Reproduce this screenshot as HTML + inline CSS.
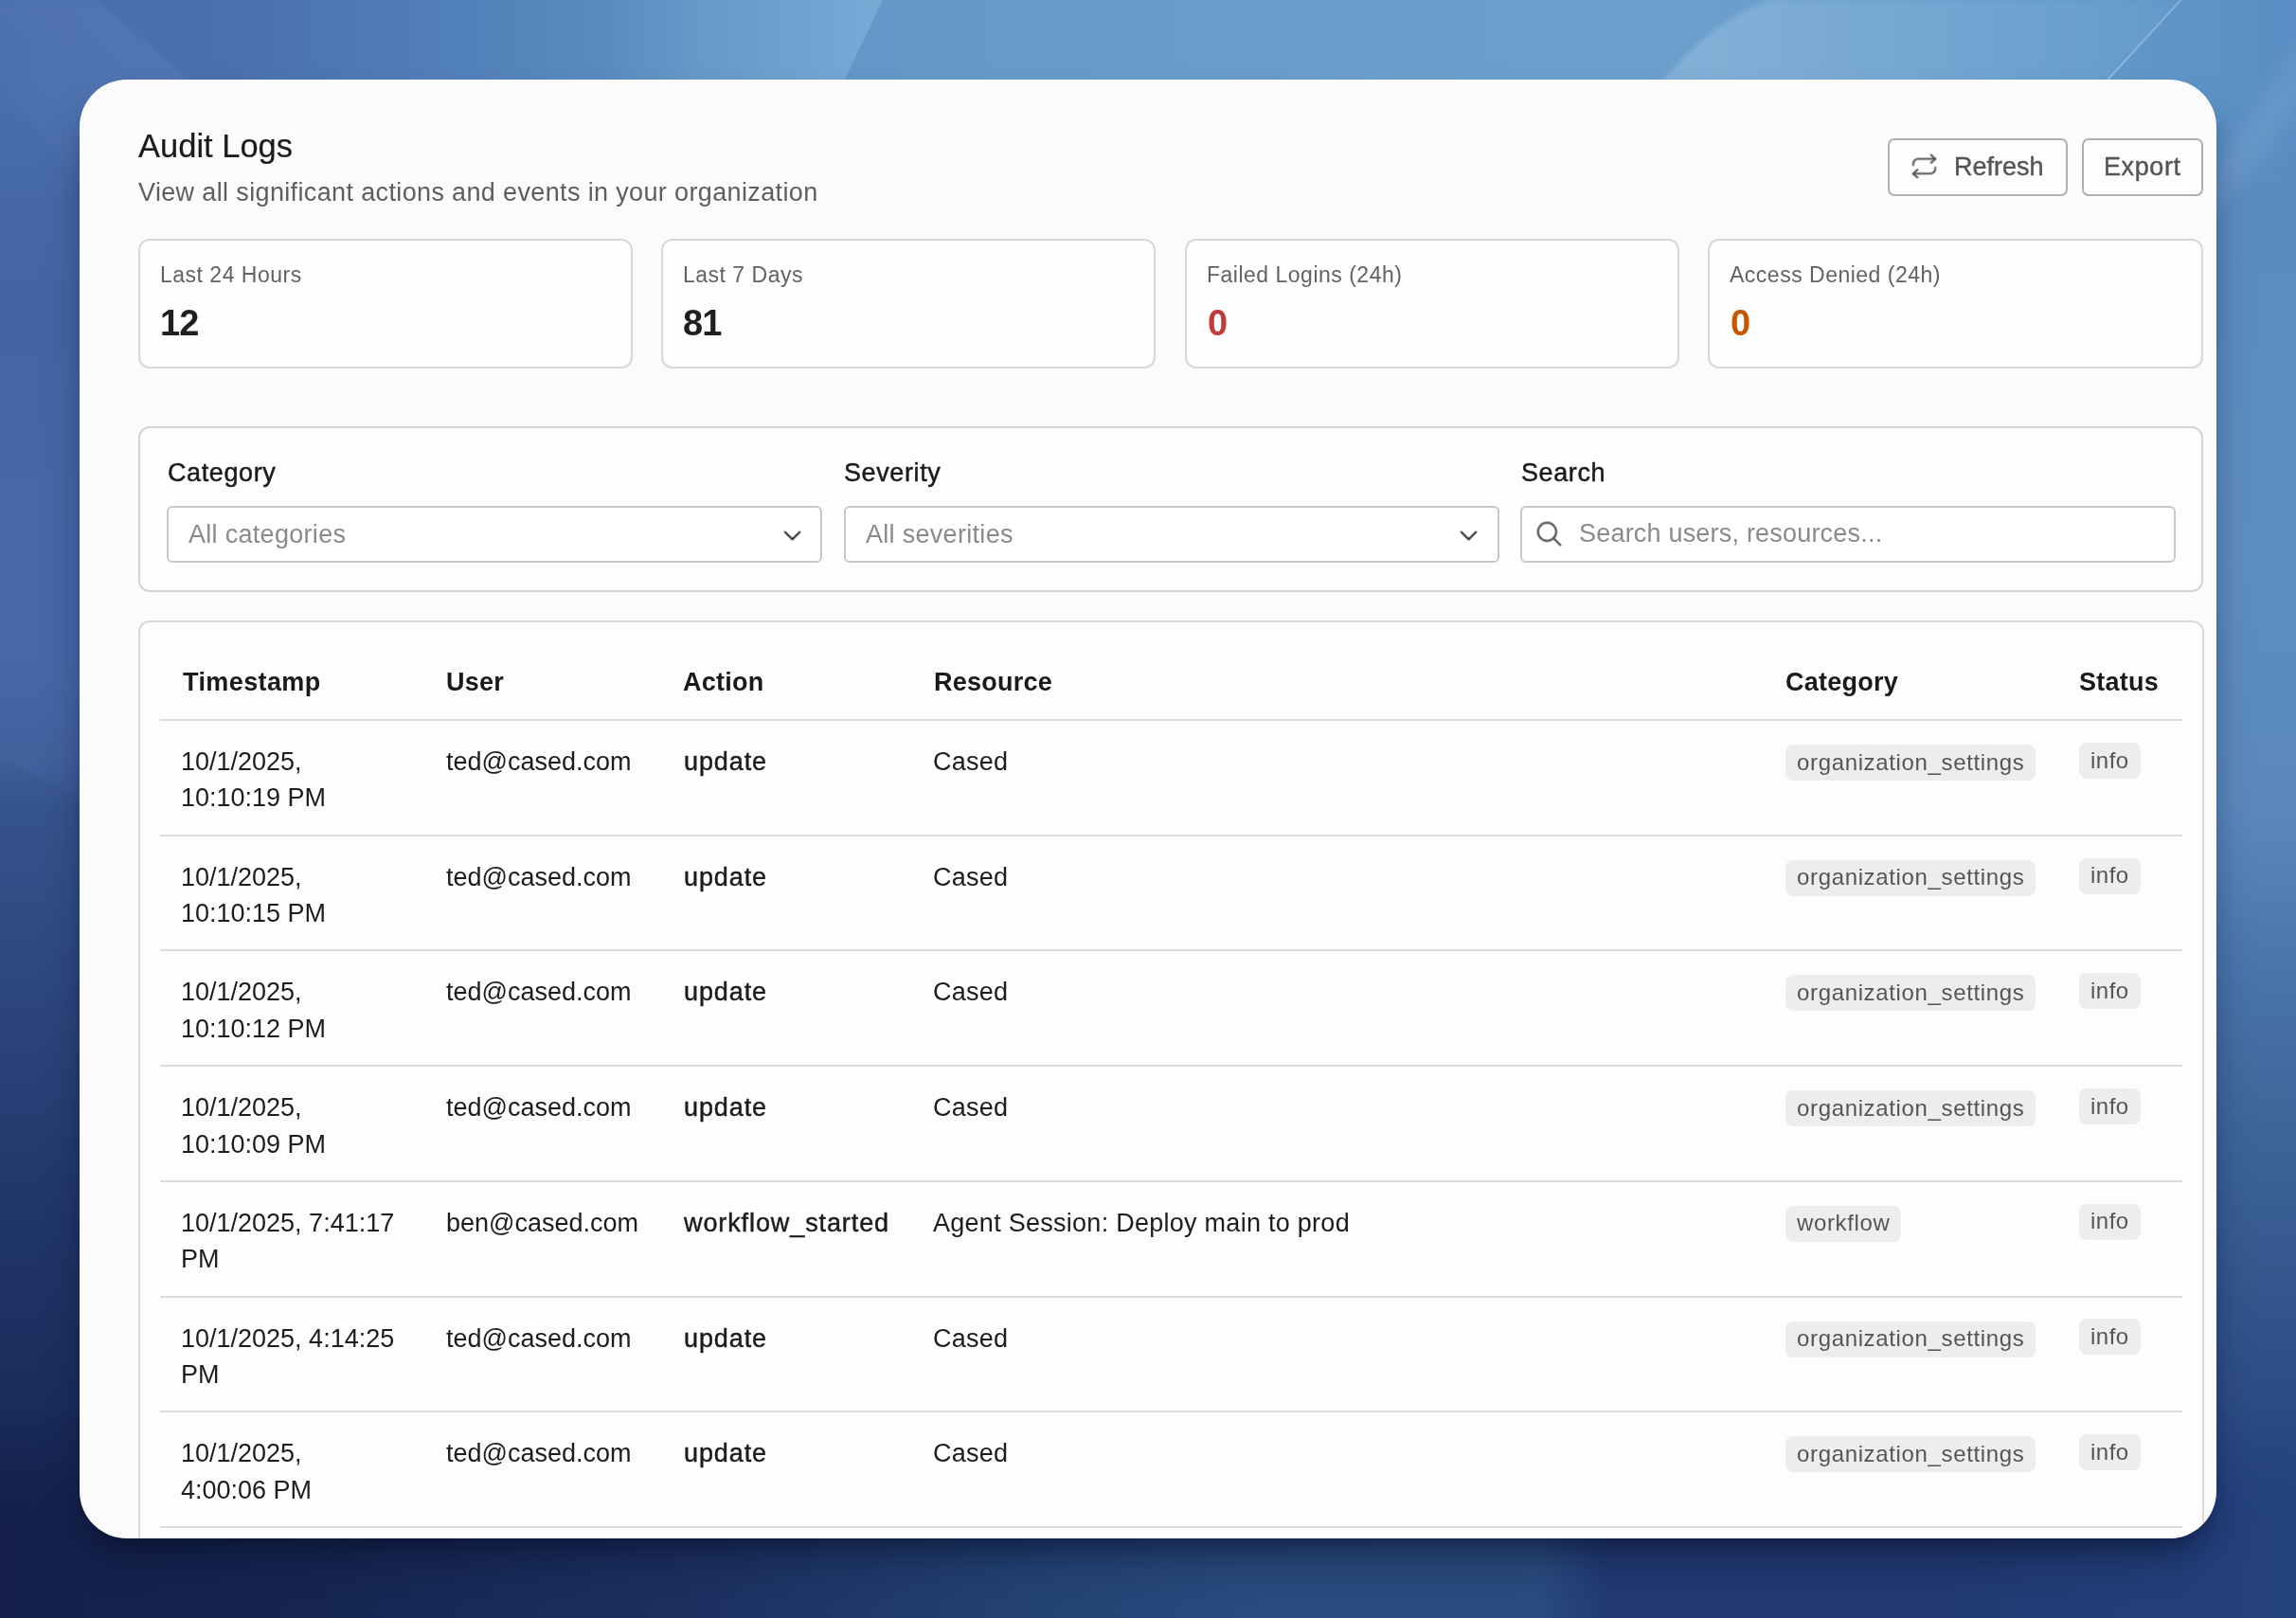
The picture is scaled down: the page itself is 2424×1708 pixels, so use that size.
<!DOCTYPE html>
<html><head><meta charset="utf-8"><title>Audit Logs</title>
<style>
html,body{margin:0;padding:0;width:2424px;height:1708px;overflow:hidden;}
body{position:relative;font-family:"Liberation Sans",sans-serif;background:#3a5a95;}
#bg{position:absolute;left:0;top:0;width:2424px;height:1708px;}
#win{position:absolute;left:84px;top:84px;width:2256px;height:1540px;border-radius:50px;background:#fbfbfb;overflow:hidden;
 box-shadow:0 26px 40px -10px rgba(5,12,35,0.5), 0 10px 14px -8px rgba(5,12,35,0.3);}
.t{position:absolute;white-space:nowrap;line-height:1;-webkit-font-smoothing:antialiased;}
#win *{will-change:transform;}
.b{position:absolute;}
</style></head><body>
<svg id="bg" width="2424" height="1708" viewBox="0 0 2424 1708">
<defs>
<linearGradient id="gl" x1="0" y1="0" x2="0" y2="1708" gradientUnits="userSpaceOnUse">
<stop offset="0" stop-color="#4a6eac"/>
<stop offset="0.18" stop-color="#4465a3"/>
<stop offset="0.40" stop-color="#4567a6"/>
<stop offset="0.47" stop-color="#3f5e9a"/>
<stop offset="0.50" stop-color="#35538c"/>
<stop offset="0.62" stop-color="#2c467c"/>
<stop offset="0.76" stop-color="#203568"/>
<stop offset="1" stop-color="#14224c"/>
</linearGradient>
<linearGradient id="gr" x1="0" y1="0" x2="0" y2="1708" gradientUnits="userSpaceOnUse">
<stop offset="0" stop-color="#5a8ec4"/>
<stop offset="0.1" stop-color="#5a8cc0"/>
<stop offset="0.35" stop-color="#5e8ec0"/>
<stop offset="0.5" stop-color="#5a88bc"/>
<stop offset="0.6" stop-color="#4a74aa"/>
<stop offset="0.70" stop-color="#3e6598"/>
<stop offset="0.85" stop-color="#2e4e86"/>
<stop offset="1" stop-color="#223e7a"/>
</linearGradient>
<linearGradient id="gt" x1="0" y1="0" x2="2424" y2="0" gradientUnits="userSpaceOnUse">
<stop offset="0" stop-color="#4a6eac"/>
<stop offset="0.1" stop-color="#4b70ae"/>
<stop offset="0.2" stop-color="#5280b8"/>
<stop offset="0.30" stop-color="#5f92c4"/>
<stop offset="0.38" stop-color="#6498c8"/>
<stop offset="0.55" stop-color="#6a9dc9"/>
<stop offset="0.72" stop-color="#6ca0cc"/>
<stop offset="0.92" stop-color="#6098c8"/>
<stop offset="1" stop-color="#5a8ec4"/>
</linearGradient>
<linearGradient id="gb" x1="0" y1="0" x2="2424" y2="0" gradientUnits="userSpaceOnUse">
<stop offset="0" stop-color="#14204a"/>
<stop offset="0.13" stop-color="#152550"/>
<stop offset="0.3" stop-color="#1c3060"/>
<stop offset="0.45" stop-color="#234274"/>
<stop offset="0.54" stop-color="#284a7c"/>
<stop offset="0.67" stop-color="#2a4b7e"/>
<stop offset="0.70" stop-color="#213a72"/>
<stop offset="0.85" stop-color="#213a72"/>
<stop offset="1" stop-color="#24427e"/>
</linearGradient>
<linearGradient id="mt" x1="0" y1="0" x2="0" y2="1" >
<stop offset="0" stop-color="#fff"/><stop offset="0.45" stop-color="#fff"/><stop offset="1" stop-color="#000"/>
</linearGradient>
<filter id="blur6" x="-50%" y="-50%" width="200%" height="200%"><feGaussianBlur stdDeviation="8"/></filter>
<filter id="blur2" x="-10%" y="-10%" width="120%" height="120%"><feGaussianBlur stdDeviation="2.5"/></filter>
<mask id="mtop"><rect x="0" y="0" width="2424" height="220" fill="url(#mt)"/></mask>
<linearGradient id="mb" x1="0" y1="1" x2="0" y2="0" >
<stop offset="0" stop-color="#fff"/><stop offset="0.45" stop-color="#fff"/><stop offset="1" stop-color="#000"/>
</linearGradient>
<mask id="mbot"><rect x="0" y="1488" width="2424" height="220" fill="url(#mb)"/></mask>
<linearGradient id="beam1" x1="640" y1="0" x2="920" y2="0" gradientUnits="userSpaceOnUse">
<stop offset="0" stop-color="#bfe0ff" stop-opacity="0"/>
<stop offset="1" stop-color="#bfe0ff" stop-opacity="0.22"/>
</linearGradient>
<linearGradient id="beam2" x1="1800" y1="0" x2="2300" y2="0" gradientUnits="userSpaceOnUse">
<stop offset="0" stop-color="#cfe8ff" stop-opacity="0.22"/>
<stop offset="1" stop-color="#cfe8ff" stop-opacity="0.05"/>
</linearGradient>
<linearGradient id="band1" x1="150" y1="40" x2="40" y2="150" gradientUnits="userSpaceOnUse">
<stop offset="0" stop-color="#cfe4ff" stop-opacity="0.055"/>
<stop offset="1" stop-color="#cfe4ff" stop-opacity="0.02"/>
</linearGradient>
<linearGradient id="beam3" x1="900" y1="0" x2="1680" y2="0" gradientUnits="userSpaceOnUse">
<stop offset="0" stop-color="#6fa0d8" stop-opacity="0"/>
<stop offset="1" stop-color="#6fa0d8" stop-opacity="0.12"/>
</linearGradient>
</defs>
<rect x="0" y="0" width="1212" height="1708" fill="url(#gl)"/>
<rect x="1212" y="0" width="1212" height="1708" fill="url(#gr)"/>
<rect x="0" y="0" width="2424" height="220" fill="url(#gt)" mask="url(#mtop)"/>
<rect x="0" y="1488" width="2424" height="220" fill="url(#gb)" mask="url(#mbot)"/>
<polygon points="560,0 932,0 891.8,84 850,170 560,170" fill="url(#beam1)"/>
<path d="M1690,170 L1757,84 C1785,50 1815,22 1866,0 L2302,0 L2225,84 L2150,170 Z" fill="url(#beam2)" filter="url(#blur2)"/>
<line x1="2150" y1="166" x2="2306" y2="-4" stroke="#d8ecff" stroke-opacity="0.35" stroke-width="2"/>
<polygon points="0,800 84,842 300,950 300,500 0,500" fill="#6a90d0" fill-opacity="0.06"/>
<polygon points="-20,0 102,0 198,84 320,190 320,330 84,192 0,87 -20,70" fill="url(#band1)" filter="url(#blur2)"/>
<path d="M2320,215 Q2380,165 2450,40" stroke="#ffffff" stroke-opacity="0.07" stroke-width="34" fill="none" filter="url(#blur6)"/>
</svg>
<div id="win">
<div class="t" style="left:61.50px;top:52.99px;font-size:34.5px;color:#1a1a1a;font-weight:400;letter-spacing:0px;-webkit-text-stroke:0.2px currentColor;">Audit Logs</div>
<div class="t" style="left:61.50px;top:106.14px;font-size:27px;color:#5e5e5e;font-weight:400;letter-spacing:0.36px;">View all significant actions and events in your organization</div>
<div class="b" style="left:1909.00px;top:62.00px;width:190.00px;height:60.50px;border:2px solid #b0b0b0;border-radius:7px;background:#fdfdfd;box-sizing:border-box;"></div>
<div class="b" style="left:2114.00px;top:62.00px;width:128.00px;height:60.50px;border:2px solid #b0b0b0;border-radius:7px;background:#fdfdfd;box-sizing:border-box;"></div>
<svg class="b" style="left:1931.9px;top:76.30000000000001px" width="31" height="31" viewBox="0 0 24 24" fill="none" stroke="#555" stroke-width="1.6" stroke-linecap="round" stroke-linejoin="round"><path d="m17.6 2.8 3.4 3.2-3.4 3.2"/><path d="M3 11v-1a4 4 0 0 1 4-4h14"/><path d="m6.4 21.2-3.4-3.2 3.4-3.2"/><path d="M21 13v1a4 4 0 0 1-4 4H3"/></svg>
<div class="t" style="left:1979.00px;top:78.84px;font-size:27px;color:#555;font-weight:400;letter-spacing:0px;-webkit-text-stroke:0.45px currentColor;">Refresh</div>
<div class="t" style="left:2137.00px;top:78.84px;font-size:27px;color:#555;font-weight:400;letter-spacing:0.6px;-webkit-text-stroke:0.45px currentColor;">Export</div>
<div class="b" style="left:62.00px;top:168.00px;width:522.00px;height:137.00px;border:2px solid #d7d7d7;border-radius:12px;background:#fefefe;box-sizing:border-box;"></div>
<div class="t" style="left:84.80px;top:194.83px;font-size:23px;color:#626262;font-weight:400;letter-spacing:0.5px;">Last 24 Hours</div>
<div class="t" style="left:84.50px;top:238.13px;font-size:38px;color:#1f1f1f;font-weight:700;letter-spacing:-0.8px;">12</div>
<div class="b" style="left:614.00px;top:168.00px;width:522.00px;height:137.00px;border:2px solid #d7d7d7;border-radius:12px;background:#fefefe;box-sizing:border-box;"></div>
<div class="t" style="left:636.80px;top:194.83px;font-size:23px;color:#626262;font-weight:400;letter-spacing:0.5px;">Last 7 Days</div>
<div class="t" style="left:636.50px;top:238.13px;font-size:38px;color:#1f1f1f;font-weight:700;letter-spacing:-0.8px;">81</div>
<div class="b" style="left:1167.00px;top:168.00px;width:521.50px;height:137.00px;border:2px solid #d7d7d7;border-radius:12px;background:#fefefe;box-sizing:border-box;"></div>
<div class="t" style="left:1189.80px;top:194.83px;font-size:23px;color:#626262;font-weight:400;letter-spacing:0.5px;">Failed Logins (24h)</div>
<div class="t" style="left:1191.00px;top:238.13px;font-size:38px;color:#c03c3a;font-weight:700;letter-spacing:-0.8px;">0</div>
<div class="b" style="left:1719.00px;top:168.00px;width:523.00px;height:137.00px;border:2px solid #d7d7d7;border-radius:12px;background:#fefefe;box-sizing:border-box;"></div>
<div class="t" style="left:1741.80px;top:194.83px;font-size:23px;color:#626262;font-weight:400;letter-spacing:0.5px;">Access Denied (24h)</div>
<div class="t" style="left:1743.00px;top:238.13px;font-size:38px;color:#c45800;font-weight:700;letter-spacing:-0.8px;">0</div>
<div class="b" style="left:62.00px;top:366.00px;width:2180.00px;height:175.00px;border:2px solid #d4d4d4;border-radius:12px;background:#fefefe;box-sizing:border-box;"></div>
<div class="t" style="left:92.50px;top:402.14px;font-size:27px;color:#1a1a1a;font-weight:400;letter-spacing:0.6px;-webkit-text-stroke:0.45px currentColor;">Category</div>
<div class="b" style="left:92.00px;top:450.00px;width:691.50px;height:60.00px;border:2px solid #c8c8c8;border-radius:6px;background:#fff;box-sizing:border-box;"></div>
<div class="t" style="left:807.30px;top:402.14px;font-size:27px;color:#1a1a1a;font-weight:400;letter-spacing:0.6px;-webkit-text-stroke:0.45px currentColor;">Severity</div>
<div class="b" style="left:806.80px;top:450.00px;width:691.50px;height:60.00px;border:2px solid #c8c8c8;border-radius:6px;background:#fff;box-sizing:border-box;"></div>
<div class="t" style="left:1521.70px;top:402.14px;font-size:27px;color:#1a1a1a;font-weight:400;letter-spacing:0.6px;-webkit-text-stroke:0.45px currentColor;">Search</div>
<div class="b" style="left:1521.20px;top:450.00px;width:691.50px;height:60.00px;border:2px solid #c8c8c8;border-radius:6px;background:#fff;box-sizing:border-box;"></div>
<div class="t" style="left:115.00px;top:467.14px;font-size:27px;color:#8a8a8a;font-weight:400;letter-spacing:0.3px;">All categories</div>
<div class="t" style="left:830.00px;top:467.14px;font-size:27px;color:#8a8a8a;font-weight:400;letter-spacing:0.3px;">All severities</div>
<svg class="b" style="left:736.5px;top:466.1px" width="31" height="31" viewBox="0 0 24 24" fill="none" stroke="#2a2a2a" stroke-width="1.6" stroke-linecap="round" stroke-linejoin="round"><path d="m6 9 6 6 6-6"/></svg>
<svg class="b" style="left:1450.5px;top:466.1px" width="31" height="31" viewBox="0 0 24 24" fill="none" stroke="#2a2a2a" stroke-width="1.6" stroke-linecap="round" stroke-linejoin="round"><path d="m6 9 6 6 6-6"/></svg>
<svg class="b" style="left:1535.7px;top:463.79999999999995px" width="32" height="32" viewBox="0 0 24 24" fill="none" stroke="#505050" stroke-width="1.65" stroke-linecap="round" stroke-linejoin="round"><circle cx="10" cy="10" r="7.2"/><path d="m20.5 20.5-5.4-5.4"/></svg>
<div class="t" style="left:1583.00px;top:465.94px;font-size:27px;color:#8a8a8a;font-weight:400;letter-spacing:0.2px;">Search users, resources...</div>
<div class="b" style="left:62.00px;top:571.00px;width:2181.00px;height:1200.00px;border:2px solid #d9d9d9;border-radius:12px;background:#fdfdfd;box-sizing:border-box;"></div>
<div class="t" style="left:108.80px;top:623.14px;font-size:27px;color:#1a1a1a;font-weight:700;letter-spacing:0.4px;">Timestamp</div>
<div class="t" style="left:387.20px;top:623.14px;font-size:27px;color:#1a1a1a;font-weight:700;letter-spacing:0.25px;">User</div>
<div class="t" style="left:637.20px;top:623.14px;font-size:27px;color:#1a1a1a;font-weight:700;letter-spacing:0.25px;">Action</div>
<div class="t" style="left:901.80px;top:623.14px;font-size:27px;color:#1a1a1a;font-weight:700;letter-spacing:0.25px;">Resource</div>
<div class="t" style="left:1801.30px;top:623.14px;font-size:27px;color:#1a1a1a;font-weight:700;letter-spacing:0.25px;">Category</div>
<div class="t" style="left:2111.20px;top:623.14px;font-size:27px;color:#1a1a1a;font-weight:700;letter-spacing:0.25px;">Status</div>
<div class="b" style="left:85.00px;top:675.00px;width:2135.00px;height:2.00px;background:#dcdcdc;"></div>
<div class="t" style="left:106.80px;top:706.94px;font-size:27px;color:#1c1c1c;font-weight:400;letter-spacing:0px;">10/1/2025,</div>
<div class="t" style="left:106.80px;top:745.44px;font-size:27px;color:#1c1c1c;font-weight:400;letter-spacing:0px;">10:10:19 PM</div>
<div class="t" style="left:387.00px;top:706.94px;font-size:27px;color:#1c1c1c;font-weight:400;letter-spacing:0px;">ted@cased.com</div>
<div class="t" style="left:637.50px;top:706.94px;font-size:27px;color:#1c1c1c;font-weight:400;letter-spacing:0.9px;-webkit-text-stroke:0.45px currentColor;">update</div>
<div class="t" style="left:901.10px;top:706.94px;font-size:27px;color:#1c1c1c;font-weight:400;letter-spacing:0.27px;">Cased</div>
<div class="b" style="left:1801.00px;top:702.00px;width:264.00px;height:38.00px;background:#ededed;border-radius:8px;"></div>
<div class="t" style="left:1812.50px;top:708.58px;font-size:24px;color:#555;font-weight:400;letter-spacing:0.65px;">organization_settings</div>
<div class="b" style="left:2111.00px;top:699.80px;width:65.00px;height:38.00px;background:#ededed;border-radius:8px;"></div>
<div class="t" style="left:2122.50px;top:706.58px;font-size:24px;color:#555;font-weight:400;letter-spacing:0.5px;">info</div>
<div class="b" style="left:85.00px;top:796.71px;width:2135.00px;height:2.00px;background:#dcdcdc;"></div>
<div class="t" style="left:106.80px;top:828.65px;font-size:27px;color:#1c1c1c;font-weight:400;letter-spacing:0px;">10/1/2025,</div>
<div class="t" style="left:106.80px;top:867.15px;font-size:27px;color:#1c1c1c;font-weight:400;letter-spacing:0px;">10:10:15 PM</div>
<div class="t" style="left:387.00px;top:828.65px;font-size:27px;color:#1c1c1c;font-weight:400;letter-spacing:0px;">ted@cased.com</div>
<div class="t" style="left:637.50px;top:828.65px;font-size:27px;color:#1c1c1c;font-weight:400;letter-spacing:0.9px;-webkit-text-stroke:0.45px currentColor;">update</div>
<div class="t" style="left:901.10px;top:828.65px;font-size:27px;color:#1c1c1c;font-weight:400;letter-spacing:0.27px;">Cased</div>
<div class="b" style="left:1801.00px;top:823.71px;width:264.00px;height:38.00px;background:#ededed;border-radius:8px;"></div>
<div class="t" style="left:1812.50px;top:830.29px;font-size:24px;color:#555;font-weight:400;letter-spacing:0.65px;">organization_settings</div>
<div class="b" style="left:2111.00px;top:821.51px;width:65.00px;height:38.00px;background:#ededed;border-radius:8px;"></div>
<div class="t" style="left:2122.50px;top:828.29px;font-size:24px;color:#555;font-weight:400;letter-spacing:0.5px;">info</div>
<div class="b" style="left:85.00px;top:918.43px;width:2135.00px;height:2.00px;background:#dcdcdc;"></div>
<div class="t" style="left:106.80px;top:950.37px;font-size:27px;color:#1c1c1c;font-weight:400;letter-spacing:0px;">10/1/2025,</div>
<div class="t" style="left:106.80px;top:988.87px;font-size:27px;color:#1c1c1c;font-weight:400;letter-spacing:0px;">10:10:12 PM</div>
<div class="t" style="left:387.00px;top:950.37px;font-size:27px;color:#1c1c1c;font-weight:400;letter-spacing:0px;">ted@cased.com</div>
<div class="t" style="left:637.50px;top:950.37px;font-size:27px;color:#1c1c1c;font-weight:400;letter-spacing:0.9px;-webkit-text-stroke:0.45px currentColor;">update</div>
<div class="t" style="left:901.10px;top:950.37px;font-size:27px;color:#1c1c1c;font-weight:400;letter-spacing:0.27px;">Cased</div>
<div class="b" style="left:1801.00px;top:945.43px;width:264.00px;height:38.00px;background:#ededed;border-radius:8px;"></div>
<div class="t" style="left:1812.50px;top:952.01px;font-size:24px;color:#555;font-weight:400;letter-spacing:0.65px;">organization_settings</div>
<div class="b" style="left:2111.00px;top:943.23px;width:65.00px;height:38.00px;background:#ededed;border-radius:8px;"></div>
<div class="t" style="left:2122.50px;top:950.01px;font-size:24px;color:#555;font-weight:400;letter-spacing:0.5px;">info</div>
<div class="b" style="left:85.00px;top:1040.14px;width:2135.00px;height:2.00px;background:#dcdcdc;"></div>
<div class="t" style="left:106.80px;top:1072.08px;font-size:27px;color:#1c1c1c;font-weight:400;letter-spacing:0px;">10/1/2025,</div>
<div class="t" style="left:106.80px;top:1110.58px;font-size:27px;color:#1c1c1c;font-weight:400;letter-spacing:0px;">10:10:09 PM</div>
<div class="t" style="left:387.00px;top:1072.08px;font-size:27px;color:#1c1c1c;font-weight:400;letter-spacing:0px;">ted@cased.com</div>
<div class="t" style="left:637.50px;top:1072.08px;font-size:27px;color:#1c1c1c;font-weight:400;letter-spacing:0.9px;-webkit-text-stroke:0.45px currentColor;">update</div>
<div class="t" style="left:901.10px;top:1072.08px;font-size:27px;color:#1c1c1c;font-weight:400;letter-spacing:0.27px;">Cased</div>
<div class="b" style="left:1801.00px;top:1067.14px;width:264.00px;height:38.00px;background:#ededed;border-radius:8px;"></div>
<div class="t" style="left:1812.50px;top:1073.72px;font-size:24px;color:#555;font-weight:400;letter-spacing:0.65px;">organization_settings</div>
<div class="b" style="left:2111.00px;top:1064.94px;width:65.00px;height:38.00px;background:#ededed;border-radius:8px;"></div>
<div class="t" style="left:2122.50px;top:1071.72px;font-size:24px;color:#555;font-weight:400;letter-spacing:0.5px;">info</div>
<div class="b" style="left:85.00px;top:1161.86px;width:2135.00px;height:2.00px;background:#dcdcdc;"></div>
<div class="t" style="left:106.80px;top:1193.80px;font-size:27px;color:#1c1c1c;font-weight:400;letter-spacing:0px;">10/1/2025, 7:41:17</div>
<div class="t" style="left:106.80px;top:1232.30px;font-size:27px;color:#1c1c1c;font-weight:400;letter-spacing:0px;">PM</div>
<div class="t" style="left:387.00px;top:1193.80px;font-size:27px;color:#1c1c1c;font-weight:400;letter-spacing:0px;">ben@cased.com</div>
<div class="t" style="left:637.50px;top:1193.80px;font-size:27px;color:#1c1c1c;font-weight:400;letter-spacing:0.9px;-webkit-text-stroke:0.45px currentColor;">workflow_started</div>
<div class="t" style="left:901.10px;top:1193.80px;font-size:27px;color:#1c1c1c;font-weight:400;letter-spacing:0.27px;">Agent Session: Deploy main to prod</div>
<div class="b" style="left:1801.00px;top:1188.86px;width:122.00px;height:38.00px;background:#ededed;border-radius:8px;"></div>
<div class="t" style="left:1812.50px;top:1195.44px;font-size:24px;color:#555;font-weight:400;letter-spacing:0.65px;">workflow</div>
<div class="b" style="left:2111.00px;top:1186.66px;width:65.00px;height:38.00px;background:#ededed;border-radius:8px;"></div>
<div class="t" style="left:2122.50px;top:1193.44px;font-size:24px;color:#555;font-weight:400;letter-spacing:0.5px;">info</div>
<div class="b" style="left:85.00px;top:1283.57px;width:2135.00px;height:2.00px;background:#dcdcdc;"></div>
<div class="t" style="left:106.80px;top:1315.51px;font-size:27px;color:#1c1c1c;font-weight:400;letter-spacing:0px;">10/1/2025, 4:14:25</div>
<div class="t" style="left:106.80px;top:1354.01px;font-size:27px;color:#1c1c1c;font-weight:400;letter-spacing:0px;">PM</div>
<div class="t" style="left:387.00px;top:1315.51px;font-size:27px;color:#1c1c1c;font-weight:400;letter-spacing:0px;">ted@cased.com</div>
<div class="t" style="left:637.50px;top:1315.51px;font-size:27px;color:#1c1c1c;font-weight:400;letter-spacing:0.9px;-webkit-text-stroke:0.45px currentColor;">update</div>
<div class="t" style="left:901.10px;top:1315.51px;font-size:27px;color:#1c1c1c;font-weight:400;letter-spacing:0.27px;">Cased</div>
<div class="b" style="left:1801.00px;top:1310.57px;width:264.00px;height:38.00px;background:#ededed;border-radius:8px;"></div>
<div class="t" style="left:1812.50px;top:1317.15px;font-size:24px;color:#555;font-weight:400;letter-spacing:0.65px;">organization_settings</div>
<div class="b" style="left:2111.00px;top:1308.37px;width:65.00px;height:38.00px;background:#ededed;border-radius:8px;"></div>
<div class="t" style="left:2122.50px;top:1315.15px;font-size:24px;color:#555;font-weight:400;letter-spacing:0.5px;">info</div>
<div class="b" style="left:85.00px;top:1405.29px;width:2135.00px;height:2.00px;background:#dcdcdc;"></div>
<div class="t" style="left:106.80px;top:1437.22px;font-size:27px;color:#1c1c1c;font-weight:400;letter-spacing:0px;">10/1/2025,</div>
<div class="t" style="left:106.80px;top:1475.72px;font-size:27px;color:#1c1c1c;font-weight:400;letter-spacing:0px;">4:00:06 PM</div>
<div class="t" style="left:387.00px;top:1437.22px;font-size:27px;color:#1c1c1c;font-weight:400;letter-spacing:0px;">ted@cased.com</div>
<div class="t" style="left:637.50px;top:1437.22px;font-size:27px;color:#1c1c1c;font-weight:400;letter-spacing:0.9px;-webkit-text-stroke:0.45px currentColor;">update</div>
<div class="t" style="left:901.10px;top:1437.22px;font-size:27px;color:#1c1c1c;font-weight:400;letter-spacing:0.27px;">Cased</div>
<div class="b" style="left:1801.00px;top:1432.29px;width:264.00px;height:38.00px;background:#ededed;border-radius:8px;"></div>
<div class="t" style="left:1812.50px;top:1438.86px;font-size:24px;color:#555;font-weight:400;letter-spacing:0.65px;">organization_settings</div>
<div class="b" style="left:2111.00px;top:1430.09px;width:65.00px;height:38.00px;background:#ededed;border-radius:8px;"></div>
<div class="t" style="left:2122.50px;top:1436.86px;font-size:24px;color:#555;font-weight:400;letter-spacing:0.5px;">info</div>
<div class="b" style="left:85.00px;top:1527.00px;width:2135.00px;height:2.00px;background:#dcdcdc;"></div>
</div>
</body></html>
